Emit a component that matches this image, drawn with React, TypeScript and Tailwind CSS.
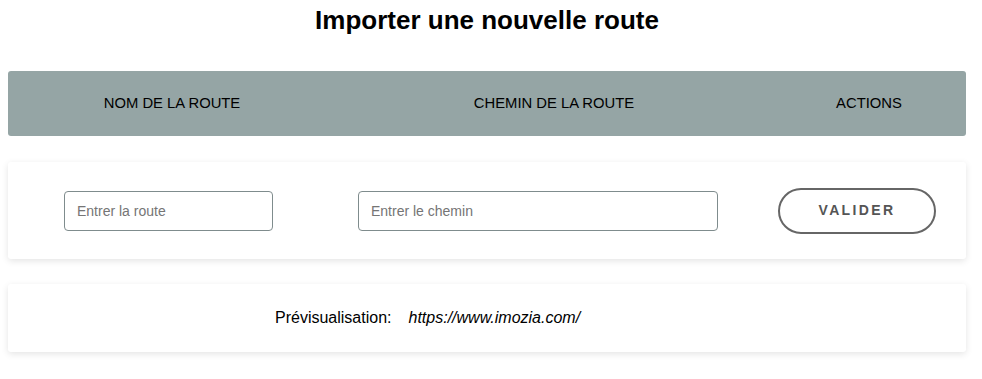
import React, { useState } from 'react';

const font = { fontFamily: '"Liberation Sans", Arial, sans-serif' };

const App: React.FC = () => {
  const [route, setRoute] = useState('');
  const [chemin, setChemin] = useState('');

  return (
    <div className="min-h-screen bg-white text-black" style={font}>
      <div className="ml-2 w-[958px]">
        <h1 className="pt-[5px] text-center text-[26px] font-bold leading-[30px]">
          Importer une nouvelle route
        </h1>

        <div className="mt-[36px] grid h-[65px] grid-cols-[328px_436px_194px] items-center rounded-[3px] bg-[#95a5a5] text-[14.8px]">
          <div className="text-center">NOM DE LA ROUTE</div>
          <div className="text-center">CHEMIN DE LA ROUTE</div>
          <div className="text-center">ACTIONS</div>
        </div>

        <div className="mt-[26px] flex h-[97px] items-center rounded-[3px] bg-white pl-[56px] shadow-[0_2px_7px_rgba(0,0,0,0.11)]">
          <input
            value={route}
            onChange={(e) => setRoute(e.target.value)}
            placeholder="Entrer la route"
            className="h-[40px] w-[209px] rounded-[4px] border border-[#7f8c8d] px-3 text-[14px] text-black outline-none placeholder:text-[#757575]"
          />
          <input
            value={chemin}
            onChange={(e) => setChemin(e.target.value)}
            placeholder="Entrer le chemin"
            className="ml-[85px] h-[40px] w-[360px] rounded-[4px] border border-[#7f8c8d] px-3 text-[14px] text-black outline-none placeholder:text-[#757575]"
          />
          <button className="ml-[60px] h-[46px] w-[158px] rounded-full border-2 border-[#666666] text-[14px] font-bold tracking-[0.17em] text-[#555555]">
            VALIDER
          </button>
        </div>

        <div className="mt-[25px] flex h-[68px] items-center rounded-[3px] bg-white pl-[267px] text-[16px] shadow-[0_2px_7px_rgba(0,0,0,0.11)]">
          <span>Prévisualisation:</span>
          <span className="ml-[17px] italic">https://www.imozia.com/</span>
        </div>
      </div>
    </div>
  );
};

export default App;
